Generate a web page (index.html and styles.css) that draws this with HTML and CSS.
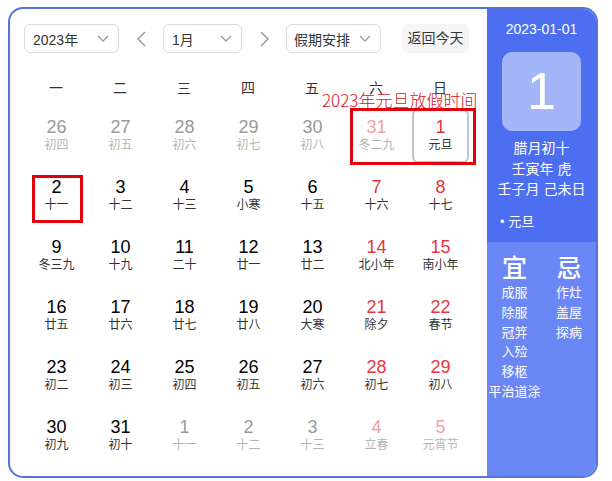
FILE: index.html
```html
<!DOCTYPE html>
<html lang="zh">
<head>
<meta charset="utf-8">
<link rel="stylesheet" href="styles.css">
</head>
<body>
<div class="cal">
  <div class="main">
    <div class="controls">
      <div class="select sel-year"><span>2023年</span><svg class="chev" width="12" height="7" viewBox="0 0 12 7"><polyline points="1,1 6,6 11,1"/></svg></div>
      <div class="arrow"><svg width="9" height="16" viewBox="0 0 9 16"><polyline points="8,1 1,8 8,15"/></svg></div>
      <div class="select sel-month"><span>1月</span><svg class="chev" width="12" height="7" viewBox="0 0 12 7"><polyline points="1,1 6,6 11,1"/></svg></div>
      <div class="arrow"><svg width="9" height="16" viewBox="0 0 9 16"><polyline points="1,1 8,8 1,15"/></svg></div>
      <div class="select sel-hol"><span>假期安排</span><svg class="chev" width="12" height="7" viewBox="0 0 12 7"><polyline points="1,1 6,6 11,1"/></svg></div>
      <div class="today-btn">返回今天</div>
    </div>
    <div class="week">
      <div>一</div><div>二</div><div>三</div><div>四</div><div>五</div><div>六</div><div>日</div>
    </div>
    <div class="days">
      <div class="d other"><b>26</b><i>初四</i></div>
      <div class="d other"><b>27</b><i>初五</i></div>
      <div class="d other"><b>28</b><i>初六</i></div>
      <div class="d other"><b>29</b><i>初七</i></div>
      <div class="d other"><b>30</b><i>初八</i></div>
      <div class="d other we"><b>31</b><i>冬二九</i></div>
      <div class="d we today"><b>1</b><i>元旦</i></div>

      <div class="d"><b>2</b><i>十一</i></div>
      <div class="d"><b>3</b><i>十二</i></div>
      <div class="d"><b>4</b><i>十三</i></div>
      <div class="d"><b>5</b><i>小寒</i></div>
      <div class="d"><b>6</b><i>十五</i></div>
      <div class="d we"><b>7</b><i>十六</i></div>
      <div class="d we"><b>8</b><i>十七</i></div>

      <div class="d"><b>9</b><i>冬三九</i></div>
      <div class="d"><b>10</b><i>十九</i></div>
      <div class="d"><b>11</b><i>二十</i></div>
      <div class="d"><b>12</b><i>廿一</i></div>
      <div class="d"><b>13</b><i>廿二</i></div>
      <div class="d we"><b>14</b><i>北小年</i></div>
      <div class="d we"><b>15</b><i>南小年</i></div>

      <div class="d"><b>16</b><i>廿五</i></div>
      <div class="d"><b>17</b><i>廿六</i></div>
      <div class="d"><b>18</b><i>廿七</i></div>
      <div class="d"><b>19</b><i>廿八</i></div>
      <div class="d"><b>20</b><i>大寒</i></div>
      <div class="d we"><b>21</b><i>除夕</i></div>
      <div class="d we"><b>22</b><i>春节</i></div>

      <div class="d"><b>23</b><i>初二</i></div>
      <div class="d"><b>24</b><i>初三</i></div>
      <div class="d"><b>25</b><i>初四</i></div>
      <div class="d"><b>26</b><i>初五</i></div>
      <div class="d"><b>27</b><i>初六</i></div>
      <div class="d we"><b>28</b><i>初七</i></div>
      <div class="d we"><b>29</b><i>初八</i></div>

      <div class="d"><b>30</b><i>初九</i></div>
      <div class="d"><b>31</b><i>初十</i></div>
      <div class="d other"><b>1</b><i>十一</i></div>
      <div class="d other"><b>2</b><i>十二</i></div>
      <div class="d other"><b>3</b><i>十三</i></div>
      <div class="d other we"><b>4</b><i>立春</i></div>
      <div class="d other we"><b>5</b><i>元宵节</i></div>
    </div>
    <div class="note-text">2023年元旦放假时间</div>
    <div class="note-box box-a"></div>
    <div class="note-box box-b"></div>
  </div>
  <div class="side">
    <div class="side-top">
      <div class="s-date">2023-01-01</div>
      <div class="s-big">1</div>
      <div class="s-lunar">
        <div>腊月初十</div>
        <div>壬寅年 虎</div>
        <div>壬子月 己未日</div>
      </div>
      <div class="s-fest">• 元旦</div>
    </div>
    <div class="side-bot">
      <div class="col">
        <div class="head">宜</div>
        <div>成服</div><div>除服</div><div>冠笄</div><div>入殓</div><div>移柩</div><div>平治道涂</div>
      </div>
      <div class="col">
        <div class="head">忌</div>
        <div>作灶</div><div>盖屋</div><div>探病</div>
      </div>
    </div>
  </div>
</div>
</body>
</html>
```
FILE: styles.css
```css
* { box-sizing: border-box; }
html, body { margin: 0; padding: 0; background: #fff; }
body {
  font-family: "Liberation Sans", "Noto Sans CJK SC", sans-serif;
  color: #333;
}
.cal {
  margin: 7px 0 0 8px;
  width: 590px;
  height: 471px;
  border: 2px solid #5574d6;
  border-radius: 15px;
  overflow: hidden;
  display: flex;
}
.main {
  position: relative;
  width: 477px;
  padding: 15px 0 0 14px;
}
.controls {
  display: flex;
  align-items: center;
  height: 29px;
}
.select {
  height: 29px;
  border: 1px solid #d9dbe0;
  border-radius: 6px;
  display: flex;
  align-items: center;
  justify-content: space-between;
  padding: 0 9px 0 8px;
  font-size: 14px;
  color: #333;
}
.sel-year { width: 95px; }
.sel-month { width: 79px; }
.sel-hol { width: 95px; padding-left: 7px; }
.chev polyline, .arrow polyline {
  fill: none;
  stroke: #999;
  stroke-width: 1.3;
}
.arrow {
  width: 44px;
  display: flex;
  justify-content: center;
  align-items: center;
}
.arrow polyline { stroke-width: 1.5; stroke: #9a9a9a; }
.today-btn {
  margin-left: 21px;
  width: 67px;
  height: 29px;
  border-radius: 6px;
  background: #f5f5f6;
  font-size: 14px;
  line-height: 29px;
  text-align: center;
  color: #333;
}
.week {
  margin-top: 17px;
  display: grid;
  grid-template-columns: repeat(7, 64px);
  height: 36px;
  line-height: 36px;
  text-align: center;
  font-size: 14px;
  color: #333;
}
.days {
  display: grid;
  grid-template-columns: repeat(7, 64px);
  grid-auto-rows: 60px;
}
.d {
  margin: 3px 3px 3px 4px;
  border: 1px solid transparent;
  border-radius: 6px;
  text-align: center;
  padding-top: 7px;
}
.d b {
  display: block;
  font-weight: normal;
  font-size: 18px;
  line-height: 20px;
  color: #000;
}
.d i {
  display: block;
  font-style: normal;
  font-size: 12px;
  line-height: 16px;
  color: #333;
}
.d.we b { color: #e8353f; }
.d.other b { color: #999; }
.d.other i { color: #b5b5b5; }
.d.other.we b { color: #f2a0a8; }
.d.today { border: 2px solid #c3c4c8; padding-top: 6px; }
.note-text {
  position: absolute;
  left: 312px;
  top: 81px;
  white-space: nowrap;
  font-family: "Noto Sans CJK SC", sans-serif;
  font-size: 17px;
  line-height: 20px;
  color: #d9121c;
  font-weight: 300;
}
.note-box {
  position: absolute;
  border: 3px solid #e3000b;
}
.box-a { left: 340px; top: 99px; width: 126px; height: 57px; }
.box-b { left: 22px; top: 166px; width: 51px; height: 48px; }
.side {
  flex: 1;
  display: flex;
  flex-direction: column;
  color: #fff;
}
.side-top {
  height: 233px;
  background: #4e6ef2;
  padding-top: 10px;
}
.s-date {
  text-align: center;
  font-size: 14px;
  line-height: 20px;
}
.s-big {
  margin: 13px auto 0;
  width: 79px;
  height: 79px;
  border-radius: 10px;
  background: #a4b5f8;
  font-size: 52px;
  line-height: 79px;
  text-align: center;
}
.s-lunar {
  margin-top: 7px;
  text-align: center;
  font-size: 14px;
  line-height: 20.5px;
}
.s-fest {
  margin-top: 12px;
  padding-left: 13px;
  font-size: 13px;
  line-height: 20px;
}
.side-bot {
  flex: 1;
  background: #6a87f5;
  display: flex;
  padding-top: 11px;
}
.col {
  width: 54px;
  text-align: center;
  font-size: 13px;
  line-height: 19.8px;
  white-space: nowrap;
}
.col:first-child { width: 55px; }
.col .head {
  font-size: 25px;
  line-height: 30px;
  font-weight: 500;
}
```
